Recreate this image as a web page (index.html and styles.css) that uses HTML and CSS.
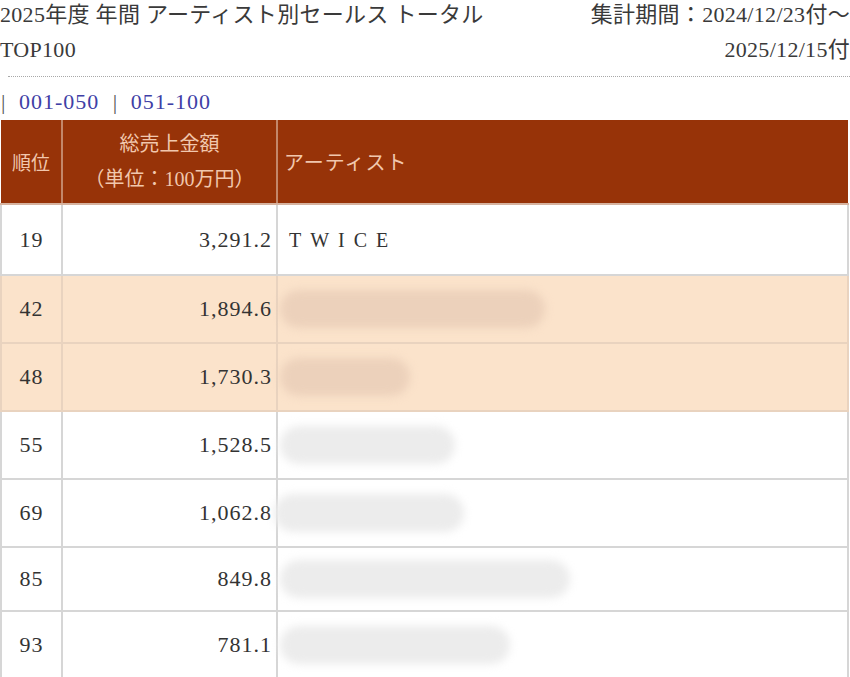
FILE: index.html
```html
<!DOCTYPE html>
<html lang="ja">
<head>
<meta charset="utf-8">
<title>2025年度 年間 アーティスト別セールス トータル TOP100</title>
<link rel="stylesheet" href="styles.css">
</head>
<body>
<div class="page">
  <div class="titlebar">
    <div class="title-left">
      <div class="line">2025年度 年間 アーティスト別セールス トータル</div>
      <div class="line">TOP100</div>
    </div>
    <div class="title-right">
      <div class="line">集計期間：2024/12/23付〜</div>
      <div class="line">2025/12/15付</div>
    </div>
  </div>
  <div class="dots"></div>
  <div class="pager">| <a href="#">001-050</a> | <a href="#">051-100</a></div>
  <table class="rank">
    <colgroup>
      <col class="c1"><col class="c2"><col class="c3">
    </colgroup>
    <thead>
      <tr>
        <th class="h-rank">順位</th>
        <th class="h-amount">総売上金額<br>（単位：100万円）</th>
        <th class="h-artist">アーティスト</th>
      </tr>
    </thead>
    <tbody>
      <tr class="r1"><td class="rk">19</td><td class="amt">3,291.2</td><td class="art"><span class="name">TWICE</span></td></tr>
      <tr class="r2 hl"><td class="rk">42</td><td class="amt">1,894.6</td><td class="art"><span class="blur b-peach w265"></span></td></tr>
      <tr class="r3 hl"><td class="rk">48</td><td class="amt">1,730.3</td><td class="art"><span class="blur b-peach w130"></span></td></tr>
      <tr class="r4"><td class="rk">55</td><td class="amt">1,528.5</td><td class="art"><span class="blur b-grey w175"></span></td></tr>
      <tr class="r5"><td class="rk">69</td><td class="amt">1,062.8</td><td class="art"><span class="blur b-grey w190 shift"></span></td></tr>
      <tr class="r6"><td class="rk">85</td><td class="amt">849.8</td><td class="art"><span class="blur b-grey w290"></span></td></tr>
      <tr class="r7"><td class="rk">93</td><td class="amt">781.1</td><td class="art"><span class="blur b-grey w230"></span></td></tr>
    </tbody>
  </table>
</div>
</body>
</html>
```

FILE: styles.css
```css
html, body {
  margin: 0;
  padding: 0;
  background: #ffffff;
  overflow: hidden;
}
body {
  font-family: "Liberation Serif", "Noto Sans CJK JP", serif;
  color: #333333;
}
.page {
  width: 850px;
}
.titlebar {
  display: flex;
  justify-content: space-between;
  width: 850px;
  font-size: 22px;
  letter-spacing: 0.3px;
  color: #3a3a3a;
}
.title-left .line,
.title-right .line {
  height: 35px;
  line-height: 30px;
  white-space: nowrap;
}
.title-right {
  text-align: right;
  letter-spacing: 0.3px;
}
.dots {
  margin: 6px 0 0 8px;
  border-top: 1px dotted #a8a8a8;
}
.pager {
  padding: 11px 0 0 1px;
  font-size: 22px;
  line-height: 27px;
  color: #555;
  height: 32px;
  letter-spacing: 1px;
}
.pager a {
  color: #3f3fa6;
  text-decoration: none;
  margin: 0 7px 0 6px;
}
table.rank {
  width: 849px;
  border-collapse: collapse;
  table-layout: fixed;
}
col.c1 { width: 61px; }
col.c2 { width: 215px; }
thead th {
  background: #973308;
  color: #f1c7ad;
  font-weight: normal;
  font-size: 20px;
  height: 83px;
  padding: 0;
  border-left: 2px solid #c3876a;
  border-bottom: 2px solid #d6b3a0;
}
thead th:first-child { border-left: none; font-size: 19px; }
th.h-rank { text-align: center; }
th.h-amount { text-align: center; line-height: 35px; }
th.h-artist { text-align: left; padding-left: 6px; letter-spacing: 1px; }
tbody td {
  border: 2px solid #d6d6d6;
  font-size: 22px;
  letter-spacing: 1px;
  padding: 0;
  height: 66px;
}
tbody tr.r1 td { height: 69px; }
tbody tr.hl td { background: #fbe3cb; border-color: #e9d3bf; }
tbody tr.r6 td { height: 62px; }
tbody tr.r7 td { height: 66px; }
td.rk { text-align: center; }
td.amt { text-align: right; padding-right: 4px; }
td.art { padding-left: 2px; }
.name {
  letter-spacing: 0.45em;
  font-size: 20px;
  padding-left: 9px;
  color: #333;
}
.blur {
  display: block;
  height: 38px;
  border-radius: 19px;
  filter: blur(4px);
}
.b-peach { background: #ecd1bb; }
.b-grey { background: #ececec; }
.w265 { width: 265px; }
.w130 { width: 130px; }
.w175 { width: 175px; }
.w190 { width: 190px; }
.w290 { width: 290px; }
.w230 { width: 230px; }
.shift { margin-left: -6px; }
```
